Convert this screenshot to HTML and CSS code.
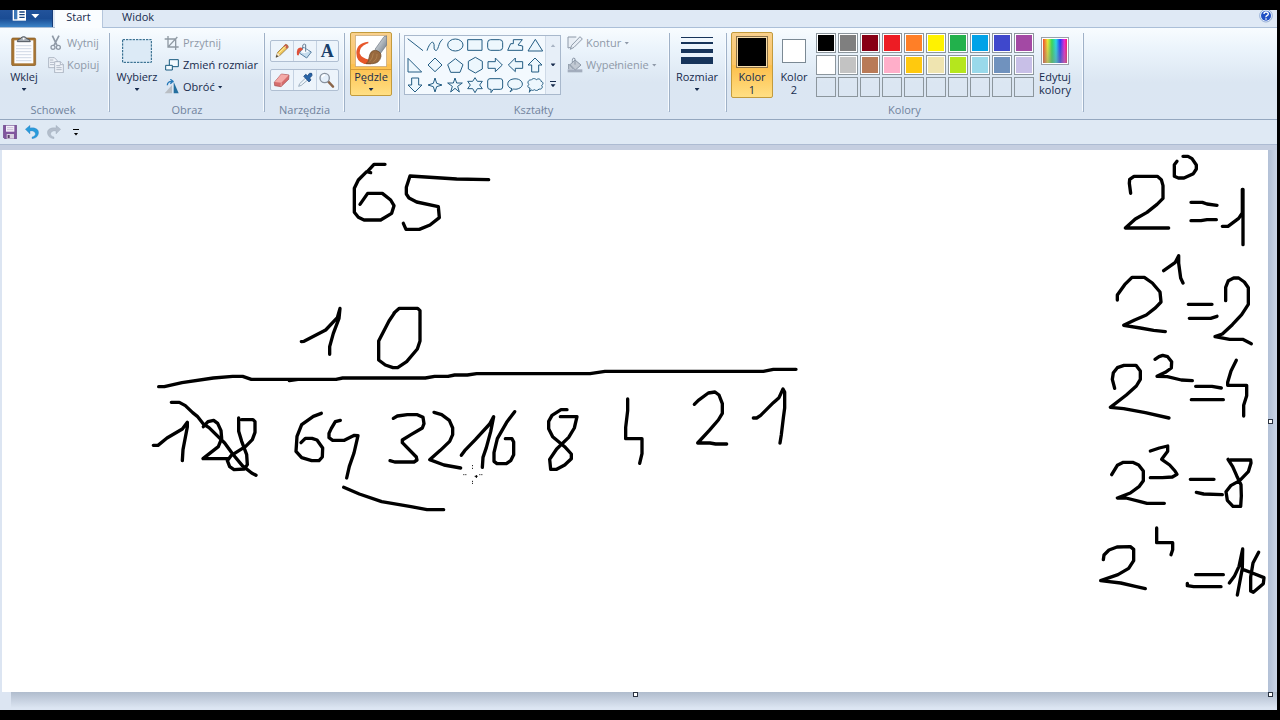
FILE: index.html
```html
<!DOCTYPE html>
<html lang="pl">
<head>
<meta charset="utf-8">
<title>Paint</title>
<link rel="stylesheet" href="styles.css">
</head>
<body>
<div class="window">
  <nav class="tabs">
    <button class="file-menu" aria-label="Menu Paint">
      <svg width="28" height="14" viewBox="0 0 84 42"><rect x="2" y="0" width="40" height="32" fill="#fff"/><rect x="6" y="0" width="10" height="28" fill="#3d78b8"/><path d="M22 6h16M22 14h16M22 22h16" stroke="#16437f" stroke-width="4"/><path d="M58 12h24l-12 13z" fill="#fff"/></svg>
    </button>
    <button class="tab active">Start</button>
    <button class="tab">Widok</button>
    <button class="help" aria-label="Pomoc">
      <svg width="14" height="14" viewBox="0 0 42 42"><circle cx="21" cy="17" r="19" fill="#e9f1fc" stroke="#6d8fc4" stroke-width="2"/><circle cx="21" cy="17" r="15" fill="#1f4fc4"/><path d="M15 12q0-6 6-6t7 5q0 4-4 6t-3 5M21 25v4" fill="none" stroke="#fff" stroke-width="4"/></svg>
    </button>
  </nav>

  <div class="ribbon">
    <section class="group clipboard">
      <div class="row">
        <button class="big">
          <span class="pic"><svg width="26" height="30" viewBox="0 0 78 90"><rect x="2" y="6" width="72" height="83" rx="4" fill="#a87532" stroke="#83561f" stroke-width="2"/><path d="M10 13h57v69H10z" fill="#fcfdff"/><path d="M15 29h46M15 38h46M15 47h46M15 56h46M15 65h46M15 74h46" stroke="#b9c6d8" stroke-width="2"/><path d="M19 17q0-8 10-9 2-6 9-6t9 6q11 1 11 9z" fill="#a5acb4" stroke="#4d545d" stroke-width="3"/><circle cx="38" cy="8" r="3" fill="#fff"/></svg></span>
          <span>Wklej</span><i class="arrow"></i>
        </button>
        <div class="stack">
          <button class="small" disabled><svg width="16" height="16" viewBox="0 0 48 48"><path d="M13 2l14 29M33 2L18 31" stroke="#8f99a6" stroke-width="5" fill="none"/><circle cx="15" cy="37" r="6" fill="none" stroke="#8f99a6" stroke-width="4"/><circle cx="31" cy="37" r="6" fill="none" stroke="#8f99a6" stroke-width="4"/></svg>Wytnij</button>
          <button class="small" disabled><svg width="16" height="16" viewBox="0 0 48 48"><g fill="#f0f4fa" stroke="#8f9aab" stroke-width="2"><path d="M2 2h17l8 8v22H2z"/><path d="M20 14h17l9 9v24H20z"/><path d="M37 14v9h9M6 9h10M6 16h12M6 23h12M25 26h12M25 32h16M25 38h16"/></g></svg>Kopiuj</button>
        </div>
      </div>
      <h2>Schowek</h2>
    </section>

    <section class="group image">
      <div class="row">
        <button class="big">
          <span class="pic"><svg width="30" height="24" viewBox="0 0 90 72"><rect x="2" y="2" width="86" height="68" fill="#dceaf6" stroke="#1d5c80" stroke-width="3" stroke-dasharray="7 3"/></svg></span>
          <span>Wybierz</span><i class="arrow"></i>
        </button>
        <div class="stack">
          <button class="small" disabled><svg width="16" height="16" viewBox="0 0 48 48"><path d="M2 12h33v33M12 3v33h32M14 34L40 6" fill="none" stroke="#8f99a3" stroke-width="4"/></svg>Przytnij</button>
          <button class="small"><svg width="16" height="16" viewBox="0 0 48 48"><g fill="#f3faff" stroke="#17597e" stroke-width="3"><path d="M16 8h27v21H16z"/><path d="M5 25h20v14H5z"/></g></svg>Zmień rozmiar</button>
          <button class="small"><svg width="16" height="16" viewBox="0 0 48 48"><path d="M24 18v25H2z" fill="#b9bec4"/><path d="M29 8v35h15z" fill="#246f9f"/><path d="M10 19q0-12 14-12M19 1l8 6-8 7" fill="none" stroke="#2478b8" stroke-width="4"/></svg>Obróć<i class="arrow"></i></button>
        </div>
      </div>
      <h2>Obraz</h2>
    </section>

    <section class="group tools">
      <div class="toolset">
        <div class="toolrow">
          <button aria-label="Ołówek"><svg width="16" height="16" viewBox="0 0 48 48"><path d="M6 43l5-15L35 4q7 0 8 9L18 37z" fill="#f0c55a" stroke="#7f622e" stroke-width="2"/><path d="M34 4q8 1 9 9l-5 4-9-9z" fill="#c65e50"/><path d="M11 29l7 8-12 6z" fill="#f7e6ca"/><path d="M14 31L36 10" stroke="#fff0a5" stroke-width="3"/><path d="M6 43l2-7 5 4z" fill="#222"/></svg></button>
          <button aria-label="Wypełnij kolorem"><svg width="18" height="16" viewBox="0 0 54 48"><path d="M22 13l24 14-14 18-22-15z" fill="#c5dced" stroke="#5980a2" stroke-width="3"/><path d="M24 15l16 10-14 6-12-3z" fill="#f7fbff"/><path d="M29 26V5q-8-5-9 5v6" fill="none" stroke="#637b91" stroke-width="3"/><path d="M17 14Q0 12 3 36q6 3 6-2 0-10 12-14z" fill="#df5139"/></svg></button>
          <button class="letter" aria-label="Tekst">A</button>
        </div>
        <div class="toolrow">
          <button aria-label="Gumka"><svg width="18" height="16" viewBox="0 0 54 48"><path d="M4 31L25 6l23 3-1 13-23 22-19-3z" fill="#d66d6d" stroke="#a54f51" stroke-width="2"/><path d="M5 30L25 7l22 3-22 22z" fill="#f4aaa7"/><path d="M25 32l-1 11" stroke="#f4b9b6" stroke-width="2"/></svg></button>
          <button aria-label="Selektor kolorów"><svg width="16" height="16" viewBox="0 0 48 48"><path d="M5 43l3-8 20-19 6 6-21 18z" fill="#eef5fb" stroke="#7890a4" stroke-width="2"/><path d="M20 13l6-6 6 4q5-11 12-7 5 7-6 14l4 6-6 6z" fill="#2864a7" stroke="#173f76" stroke-width="2"/></svg></button>
          <button aria-label="Lupa"><svg width="18" height="16" viewBox="0 0 54 48"><path d="M31 29l14 15" stroke="#8b6548" stroke-width="7" stroke-linecap="round"/><circle cx="20" cy="18" r="14" fill="#e5f0fb" stroke="#88929f" stroke-width="4"/><path d="M12 16q2-7 9-7" stroke="#fff" stroke-width="4" fill="none"/></svg></button>
        </div>
      </div>
      <h2>Narzędzia</h2>
    </section>

    <section class="group brushes">
      <button class="big selected split">
        <span class="pic"><svg width="32" height="32" viewBox="0 0 96 96"><defs><linearGradient id="metal" x1="0" y1="0" x2="1" y2="1"><stop offset="0" stop-color="#f4f7f9"/><stop offset="1" stop-color="#66727e"/></linearGradient></defs><path d="M1 1h94v94H1z" fill="#fff" stroke="#b48b52" stroke-width="2"/><path d="M40 20Q4 24 4 54q0 26 24 33l20 1-5-14Q19 70 14 55q-1-20 21-29l5-1z" fill="#e7572a"/><path d="M60 43L87 5l8-2v27L75 57z" fill="url(#metal)" stroke="#6b7480" stroke-width="2"/><path d="M33 86q8-5 9-18 3-22 19-22 18 3 17 18-4 21-25 22z" fill="#98693e" stroke="#674525" stroke-width="2"/><path d="M44 79q9-8 11-24M55 80q12-7 11-23" stroke="#ba8b58" stroke-width="2" fill="none"/></svg></span>
        <span>Pędzle</span><i class="arrow"></i>
      </button>
    </section>

    <section class="group shapes">
      <div class="row">
        <div class="gallery">
          <div class="shape-grid">
            <button aria-label="Linia"><svg viewBox="0 0 60 54"><path d="M8 8l46 36"/></svg></button>
            <button aria-label="Krzywa"><svg viewBox="0 0 60 54"><path d="M6 44c5-16 14-30 19-24 6 7-2 19 6 23 10 4 8-24 22-33"/></svg></button>
            <button aria-label="Owal"><svg viewBox="0 0 60 54"><ellipse cx="31" cy="27" rx="23" ry="18"/></svg></button>
            <button aria-label="Prostokąt"><svg viewBox="0 0 60 54"><path d="M8 11h43v32H8z"/></svg></button>
            <button aria-label="Prostokąt zaokrąglony"><svg viewBox="0 0 60 54"><rect x="8" y="11" width="45" height="32" rx="9"/></svg></button>
            <button aria-label="Wielokąt"><svg viewBox="0 0 60 54"><path d="M8 43l9-20h8V11h27L39 27l14 3v13z"/></svg></button>
            <button aria-label="Trójkąt"><svg viewBox="0 0 60 54"><path d="M31 10l22 35H9z"/></svg></button>
            <button aria-label="Trójkąt prostokątny"><svg viewBox="0 0 60 54"><path d="M9 7v41h41z"/></svg></button>
            <button aria-label="Romb"><svg viewBox="0 0 60 54"><path d="M30 6l21 21-21 20L9 27z"/></svg></button>
            <button aria-label="Pięciokąt"><svg viewBox="0 0 60 54"><path d="M31 8l23 18-9 23H17L8 26z"/></svg></button>
            <button aria-label="Sześciokąt"><svg viewBox="0 0 60 54"><path d="M31 4l21 12v23L31 51 10 39V16z"/></svg></button>
            <button aria-label="Strzałka w prawo"><svg viewBox="0 0 60 54"><path d="M9 17h22V6l21 21-21 20V37H9z"/></svg></button>
            <button aria-label="Strzałka w lewo"><svg viewBox="0 0 60 54"><path d="M53 17H31V6L10 27l21 20V37h22z"/></svg></button>
            <button aria-label="Strzałka w górę"><svg viewBox="0 0 60 54"><path d="M20 48V27H9L30 6l21 21H41v21z"/></svg></button>
            <button aria-label="Strzałka w dół"><svg viewBox="0 0 60 54"><path d="M20 6v21H9l21 21 21-21H41V6z"/></svg></button>
            <button aria-label="Gwiazda czteroramienna"><svg viewBox="0 0 60 54"><path d="M30 6l5 16 16 5-16 5-5 16-5-16-16-5 16-5z"/></svg></button>
            <button aria-label="Gwiazda pięcioramienna"><svg viewBox="0 0 60 54"><path d="M30 6l5 15h17L38 31l5 17-13-11-13 11 5-17L8 21h17z"/></svg></button>
            <button aria-label="Gwiazda sześcioramienna"><svg viewBox="0 0 60 54"><path d="M30 5l7 11h15l-8 11 8 11H37l-7 12-7-12H8l8-11-8-11h15z"/></svg></button>
            <button aria-label="Prostokątny dymek"><svg viewBox="0 0 60 54"><path d="M15 8h31q7 0 7 7v18q0 7-7 7H25l-7 10V40h-3q-7 0-7-7V15q0-7 7-7z"/></svg></button>
            <button aria-label="Owalny dymek"><svg viewBox="0 0 60 54"><path d="M21 38C3 34 4 12 24 9c27-5 39 21 16 29-5 2-10 2-14 1l-11 9z"/></svg></button>
            <button aria-label="Dymek w kształcie chmury"><svg viewBox="0 0 60 54"><path d="M15 36c-8 0-8-8-3-11-7-5-1-15 7-13 5-7 12-4 15-1 7-5 14-1 14 5 8 2 7 9 2 12 5 7-1 13-8 11-4 6-11 5-14 2-4 3-8 3-10 0l-5 8z"/></svg></button>
          </div>
          <div class="scroller">
            <button disabled aria-label="Przewiń w górę"><i class="arrow up"></i></button>
            <button aria-label="Przewiń w dół"><i class="arrow"></i></button>
            <button class="more" aria-label="Więcej kształtów"><i class="arrow"></i></button>
          </div>
        </div>
        <div class="stack">
          <button class="small" disabled><svg width="16" height="16" viewBox="0 0 48 48"><path d="M28 6H3v33l8-2M10 43l4-12L39 5l7 7-25 25z" fill="#e8eef5" stroke="#8d99a8" stroke-width="3"/></svg>Kontur<i class="arrow"></i></button>
          <button class="small" disabled><svg width="16" height="16" viewBox="0 0 48 48"><path d="M2 37h44v9H2z" fill="#a3adbd"/><path d="M5 36V21l14 15M24 9l18 15-17 15L9 23z" fill="#c1c9d3" stroke="#8d99a8" stroke-width="3"/><path d="M24 23V5q-8-5-8 5v7" fill="none" stroke="#8d99a8" stroke-width="3"/></svg>Wypełnienie<i class="arrow"></i></button>
        </div>
      </div>
      <h2>Kształty</h2>
    </section>

    <section class="group size">
      <button class="big">
        <span class="pic"><svg width="32" height="28" viewBox="0 0 32 28"><path d="M0 0h32v1H0zM0 5h32v2H0zM0 12h32v4H0zM0 20h32v7H0z" fill="#17345a"/></svg></span>
        <span>Rozmiar</span><i class="arrow"></i>
      </button>
    </section>

    <section class="group colors">
      <div class="row">
        <button class="big selected primary"><span class="pic"><b class="swatch black"></b></span><span>Kolor<br>1</span></button>
        <button class="big"><span class="pic"><b class="swatch white"></b></span><span>Kolor<br>2</span></button>
        <div class="palette">
          <button class="black" aria-label="Czarny"></button><button class="gray" aria-label="Szary"></button><button class="maroon" aria-label="Ciemnoczerwony"></button><button class="red" aria-label="Czerwony"></button><button class="orange" aria-label="Pomarańczowy"></button><button class="yellow" aria-label="Żółty"></button><button class="green" aria-label="Zielony"></button><button class="turquoise" aria-label="Turkusowy"></button><button class="indigo" aria-label="Indygo"></button><button class="purple" aria-label="Purpurowy"></button>
          <button class="white" aria-label="Biały"></button><button class="silver" aria-label="Jasnoszary"></button><button class="brown" aria-label="Brązowy"></button><button class="rose" aria-label="Różowy"></button><button class="gold" aria-label="Złoty"></button><button class="cream" aria-label="Kremowy"></button><button class="lime" aria-label="Limonkowy"></button><button class="aqua" aria-label="Jasnoturkusowy"></button><button class="steel" aria-label="Niebieskoszary"></button><button class="lavender" aria-label="Lawendowy"></button>
          <button class="empty" aria-label="Pusty 1"></button><button class="empty" aria-label="Pusty 2"></button><button class="empty" aria-label="Pusty 3"></button><button class="empty" aria-label="Pusty 4"></button><button class="empty" aria-label="Pusty 5"></button><button class="empty" aria-label="Pusty 6"></button><button class="empty" aria-label="Pusty 7"></button><button class="empty" aria-label="Pusty 8"></button><button class="empty" aria-label="Pusty 9"></button><button class="empty" aria-label="Pusty 10"></button>
        </div>
        <button class="big"><span class="pic"><b class="swatch rainbow"></b></span><span>Edytuj<br>kolory</span></button>
      </div>
      <h2>Kolory</h2>
    </section>
  </div>

  <div class="quick">
    <button aria-label="Zapisz"><svg width="14" height="14" viewBox="0 0 42 42"><path d="M1 1h40v40H5l-4-4z" fill="#80569e" stroke="#654083" stroke-width="2"/><path d="M9 2h25v18H9z" fill="#f3f0fa"/><path d="M12 8h19M12 14h19" stroke="#b4a7c6" stroke-width="2"/><path d="M11 27h22v14H11z" fill="#d8d1e0"/><path d="M14 30h6v9h-6z" fill="#594069"/></svg></button>
    <button aria-label="Cofnij"><svg width="14" height="14" viewBox="0 0 42 42"><path d="M1 13L15 1v8c20-3 30 8 24 21-3 7-9 10-18 11v-5c9-3 12-8 9-13-2-5-8-6-15-5v9z" fill="#299bda" stroke="#4383c4"/></svg></button>
    <button disabled aria-label="Ponów"><svg width="14" height="14" viewBox="0 0 42 42"><path d="M41 13L27 1v8C7 6-3 17 3 30c3 7 9 10 18 11v-5c-9-3-12-8-9-13 2-5 8-6 15-5v9z" fill="#b3bdcb" stroke="#9ca9ba"/></svg></button>
    <button class="more" aria-label="Dostosuj pasek"><i class="arrow"></i></button>
  </div>

  <main class="workspace">
    <div class="paper">
      <svg class="ink" viewBox="6 450 3798 1626" preserveAspectRatio="xMinYMin meet" role="img" aria-label="Odręczny rysunek">
        <g transform="translate(990 450)">
          <path d="M165 43h-33l-20 22 10 3-12-3-25 25-12 25v72l12 15 17 8h50l33-20 7-23-10-17-25-20h-44l-23 33"/>
          <path d="M476 89l-96-2-140-9-11 34v20l8 12 23 12 65 14 3 33-28 22-32 13h-40l-8-18"/>
        </g>
        <g transform="translate(420 870)">
          <path d="M484 155l8-1 65-34 35-37 8-28-3 30-17 45-11 40v23"/>
          <path d="M764 68l-17 25-31 60v57l20 15 23 8h14l27-18 32-38 8-24V62l-7-7h-55l-16 14"/>
          <path d="M56 290h17l53-12 94-14 58-5h30l26 9h140l-26 4 20-4h120l20-4h248l28-5h40l20-4h38l28-4h340l45-7h475l30-6h68"/>
          <path d="M40 466h14l27-22 46-27 15-20v14l-13 68-2 33"/>
          <path d="M190 410l14-15 17-4 12 9 10 22 2 23-10 25-46 36h75"/>
          <path d="M296 384v40l9 30 15 40 2 30-9 13-31 2-13-9-7-18 11-15 44-28 20-20 8-22v-32l-6-6h-34"/>
          <path d="M94 337h24l18 10 22 21 14 11 18 23 17 11 47 46 24 33 29 35 28 22 13 7"/>
          <path d="M544 370l-24 9-35 25-14 35-3 45 17 19 30 9h22l10-11 1-27-17-24-15-5h-20l-13 13"/>
          <path d="M601 391l-15 4-12 20-7 15v13l11 8h35l30-15 11 1-12 52-14 40-8 35"/>
          <path d="M760 385l12-7 30-4h30l17 8 3 19-5 13-34 20-26 16v8l42 43 2 9-9 6h-58l-14-4"/>
          <path d="M882 367l23 7 23 17 10 23v20l-9 20-28 27-32 28 43 16 50 9"/>
          <path d="M964 496l10-14 32-33 43-47 12-22-9 45-13 48-10 29-2 30"/>
          <path d="M611 592l47 20 67 23 88 15 48 9h50"/>
        </g>
        <g transform="translate(1410 1050)">
          <path d="M134 185l-24 32-28 49-10 42v26l9 7h28l13-9 9-18v-38l-5-10h-20"/>
          <path d="M291 179h-18l-27 17-10 18v22l12 24 36 30 20 22v14l-20 19-24 13h-18l-3-30 21-31 36-35 17-28 8-34h-50"/>
          <path d="M473 147v35l-6 50v34h49v45l-7 29"/>
          <path d="M673 163l12-12 30-22 20-3 12 9 10 26v29l-12 20-27 31-35 38h37l17 3h33"/>
          <path d="M850 204h10l12-8 38-38 17-15 12-26 5 9v48l-4 30-6 50-4 25"/>
        </g>
        <g transform="translate(3270 450)">
          <path d="M122 130l-4-30 1-12 13-9h70l12 10 5 18v38l-18 18-30 24-35 20-30 27h130"/>
          <path d="M261 34l-8 10v35l12 5h17l28-13 9-14V45l-13-19-12-7h-15"/>
          <path d="M303 157h34l14 5 30 4M303 212h30l18-3h28M459 118v166M457 118v71l-11 16-32 24h-17"/>
          <path d="M82 450v-15l22-31 22-22h37l24 17 23 27 3 30-16 17-28 22-35 15-33 16 50 8 40 7 35 4"/>
          <path d="M221 362l35-25 10-20v23l6 44 7 15"/>
          <path d="M295 463h71M298 505h64l19-6M407 452v-40l8-20 16-8h15l17 12 12 17v50l-20 31-28 30-30 28-22 8 44 8h39l26 13"/>
        </g>
        <g transform="translate(3270 1050)">
          <path d="M74 115l-7-27 3-20 12-15 20-7h36l13 17v25l-12 20-30 27-48 37 40 4 65 12 71 16"/>
          <path d="M195 28l12-8 11-4 15 4 12 15-1 19-18 13-25 12 31 1 42 10 33 2"/>
          <path d="M317 109h49l28 5M304 149h96M439 31l-16 32-10 34v9h57v31l-9 29v32"/>
          <path d="M65 374l17-28 18-9h28l18 8 14 18v29l-12 17-27 20-39 15h26l43 11 20 5h52"/>
          <path d="M181 303l27-9 25-6v16l-18 24 24 17 16 18 6 10-14 8-30 2h-36"/>
          <path d="M301 388h71M319 427l22 5 56 2M414 328l14 22 12 27 13 27 1 34-2 31h-23l-17-18-4-26 14-18 27-15 26-27 8-26-1-9h-61"/>
          <path d="M40 629l2-14 15-15 24-9 40-1 10 8v34l-15 23-32 19-52 18 60 7 44 10 30 7"/>
          <path d="M200 534v44h48v21l-5 15"/>
          <path d="M317 674h83M292 700v7l19 3h82M418 699l15-20 14-30 11-52-1 58-15 80M506 607l-17 32-7 42v42l8 4 30-26 2-18-35-14-27-10"/>
        </g>
        <g class="crosshair" transform="translate(420 870)"><path d="M996 527h3M996 535h3M996 574h3M996 580h3M970 554h3M976 554h3M1018 554h3M1024 554h3M1004 559h9M1009 555v9"/></g>
      </svg>
      <i class="handle right"></i><i class="handle bottom"></i><i class="handle corner"></i>
    </div>
  </main>
</div>
</body>
</html>
```
FILE: styles.css
```css
* { box-sizing: border-box; }
body {
  margin: 0;
  background: #000;
  color: #172b4d;
  font: 11px/14px "Open Sans", "Noto Sans", sans-serif;
}
button {
  margin: 0;
  padding: 0;
  border: 0;
  background: none;
  color: inherit;
  font: inherit;
}
svg { display: block; flex: none; }
.window {
  display: flex;
  flex-direction: column;
  height: 100vh;
  padding: 10px 3px 10px 0;
}
.tabs {
  display: flex;
  flex: none;
  height: 18px;
  background: #dfe9f5;
  border-bottom: 1px solid #abbfd8;
}
.file-menu {
  display: flex;
  justify-content: center;
  width: 53px;
  height: 17px;
  margin-right: 2px;
  background: linear-gradient(#22539b, #1a4c94 50%, #3b83c7);
  border-right: 1px solid #173d78;
}
.tab { width: 47px; height: 17px; padding-bottom: 3px; }
.tab + .tab { width: 70px; }
.tab.active {
  width: 48px;
  height: 18px;
  padding-bottom: 4px;
  background: #fafdff;
  border-right: 1px solid #b5c6dc;
}
.help {
  display: flex;
  align-items: flex-start;
  margin: 0 4px 0 auto;
}
.ribbon {
  display: flex;
  flex: none;
  padding: 4px 0 2px;
  background: linear-gradient(#f8fcff, #eaf3fb 25%, #dbe6f2 60%, #dbe6f3);
  border-bottom: 1px solid #94a7bf;
}
.group {
  display: flex;
  flex: none;
  flex-direction: column;
  height: 85px;
  border-right: 1px solid;
  border-image: linear-gradient(transparent 2px, #9fb1c7 2px 79px, transparent 79px) 1;
  background: linear-gradient(#f7fbff, #f7fbff) right 0 top 2px / 1px 77px no-repeat padding-box;
}
.group h2 {
  margin: auto 0 0;
  color: #71839d;
  font: inherit;
  text-align: center;
}
.row { display: flex; }
.clipboard { width: 110px; padding-left: 3px; }
.image { width: 155px; padding-left: 6px; }
.tools { width: 80px; }
.brushes { width: 55px; padding-left: 5px; }
.shapes { width: 270px; padding-left: 4px; }
.size { width: 57px; padding-left: 6px; }
.colors { width: 357px; padding-left: 4px; }
.clipboard h2 { margin-right: 6px; }
.image h2 { margin-left: -6px; }
.shapes h2 { margin-right: 6px; }
.colors h2 { margin-right: 5px; }
.big {
  display: flex;
  flex-direction: column;
  align-items: center;
  width: 42px;
  height: 66px;
  line-height: 13px;
  white-space: nowrap;
}
.big .pic {
  display: flex;
  align-items: center;
  justify-content: center;
  flex: none;
  height: 38px;
}
.big .arrow { margin-top: 5px; }
.arrow {
  display: block;
  flex: none;
  width: 5px;
  height: 3px;
  background: currentColor;
  clip-path: polygon(0 0, 100% 0, 50% 100%);
}
.arrow.up { clip-path: polygon(0 100%, 100% 100%, 50% 0); }
.selected {
  border: 1px solid #c29b3d;
  border-radius: 2px;
  background: linear-gradient(#f9d08c, #fbc565 50%, #fdbf4b 51%, #ffdf84);
}
.selected .pic { height: 37px; }
.split { height: 64px; }
.split .pic { width: 100%; border-bottom: 1px solid #d69b38; }
.stack { display: flex; flex-direction: column; }
.clipboard .stack { margin-left: 3px; }
.image .stack { margin-left: 6px; }
.shapes .stack { margin-left: 6px; }
.small {
  display: flex;
  align-items: center;
  gap: 3px;
  height: 22px;
  white-space: nowrap;
}
.small:disabled { color: #8f99a8; }
.toolset {
  display: flex;
  flex-direction: column;
  gap: 7px;
  padding: 8px 5px 0;
}
.toolrow {
  display: grid;
  grid-template-columns: repeat(3, 1fr);
  height: 22px;
  border: 1px solid #b0bfd2;
  border-radius: 2px;
  background: #edf4fb;
}
.toolrow button { display: grid; place-items: center; }
.toolrow button + button { border-left: 1px solid #c5d2e2; }
.toolrow .letter {
  color: #183f6b;
  font: bold 18px/20px "Liberation Serif", serif;
}
.gallery {
  display: flex;
  width: 157px;
  height: 60px;
  margin-top: 3px;
  border: 1px solid #a8b8cc;
  background: #f3f9fe;
}
.shape-grid {
  display: grid;
  grid-template-columns: repeat(7, 20px);
  grid-auto-rows: 18px;
  gap: 2px 0;
}
.shape-grid svg {
  width: 20px;
  height: 18px;
  fill: #edf7fd;
  stroke: #245d83;
  stroke-width: 3;
}
.scroller {
  display: grid;
  grid-template-rows: repeat(3, 1fr);
  flex: 1;
  border-left: 1px solid #cfdae7;
  background: #e7eff8;
}
.scroller button { display: grid; place-items: center; }
.scroller button:disabled { color: #a9b4c4; }
.more .arrow { margin-top: 3px; }
.more { position: relative; }
.more::before {
  content: "";
  position: absolute;
  top: calc(50% - 3px);
  left: calc(50% - 3px);
  width: 6px;
  height: 1px;
  background: currentColor;
}
.swatch { width: 24px; height: 24px; border: 1px solid #7b8994; }
.swatch.black {
  width: 32px;
  height: 32px;
  border: 1px solid #8b7147;
  box-shadow: inset 0 0 0 1px #f6dca8;
}
.swatch.rainbow {
  width: 28px;
  height: 28px;
  border: 1px solid #98a0aa;
  box-shadow: inset 0 0 0 1px #fff;
  background:
    linear-gradient(transparent, #8888),
    linear-gradient(90deg, #f22, #ee3 22%, #3d5 38%, #2de 54%, #23f 70%, #e2d 86%, #f13);
}
.colors .pic { height: 38px; }
.colors .selected .pic { height: 37px; }
.palette {
  display: grid;
  grid-template-columns: repeat(10, 20px);
  grid-auto-rows: 20px;
  gap: 2px;
  margin: 1px 0 0 1px;
}
.palette button {
  border: 1px solid #8c969d;
  box-shadow: inset 0 0 0 1px #fff;
}
.palette .empty { box-shadow: none; }
.black { background: #000; }
.white { background: #fff; }
.gray { background: #7f7f7f; }
.maroon { background: #880015; }
.red { background: #ed1c24; }
.orange { background: #ff7f27; }
.yellow { background: #fff200; }
.green { background: #22b14c; }
.turquoise { background: #00a2e8; }
.indigo { background: #3f48cc; }
.purple { background: #a349a4; }
.silver { background: #c3c3c3; }
.brown { background: #b97a57; }
.rose { background: #ffaec9; }
.gold { background: #ffc90e; }
.cream { background: #efe4b0; }
.lime { background: #b5e61d; }
.aqua { background: #99d9ea; }
.steel { background: #7092be; }
.lavender { background: #c8bfe7; }
.quick {
  display: flex;
  align-items: center;
  flex: none;
  gap: 8px;
  height: 25px;
  padding-left: 3px;
  background: #dfe9f4;
  border-bottom: 1px solid #adbbd2;
}
.quick .more { width: 14px; height: 14px; color: #000; }
.quick .more .arrow { margin: 4px auto 0; }
.workspace {
  display: flex;
  flex: 1;
  min-height: 0;
  padding: 5px 9px 18px 2px;
  background:
    linear-gradient(#c5cee0, #c5cee0) 0 0 / 100% 5px no-repeat,
    linear-gradient(#b0bccd, #dce5f2 16px) 11px 100% / 100% 18px no-repeat,
    linear-gradient(90deg, #b2c0d6, #cad5e6) 100% 0 / 9px 100% no-repeat,
    #dce5f2;
}
.paper { position: relative; flex: 1; background: #fff; }
.ink {
  width: 100%;
  height: 100%;
  fill: none;
  stroke: #000;
  stroke-width: 10;
  stroke-linecap: round;
  stroke-linejoin: round;
}
.crosshair { stroke-width: 3; stroke-linecap: butt; }
.handle {
  position: absolute;
  width: 5px;
  height: 5px;
  border: 1px solid #2b3340;
  background: #fff;
}
.handle.right { right: -5px; top: 50%; margin-top: -2px; }
.handle.bottom { bottom: -5px; left: 50%; margin-left: -2px; }
.handle.corner { right: -5px; bottom: -5px; }
```
